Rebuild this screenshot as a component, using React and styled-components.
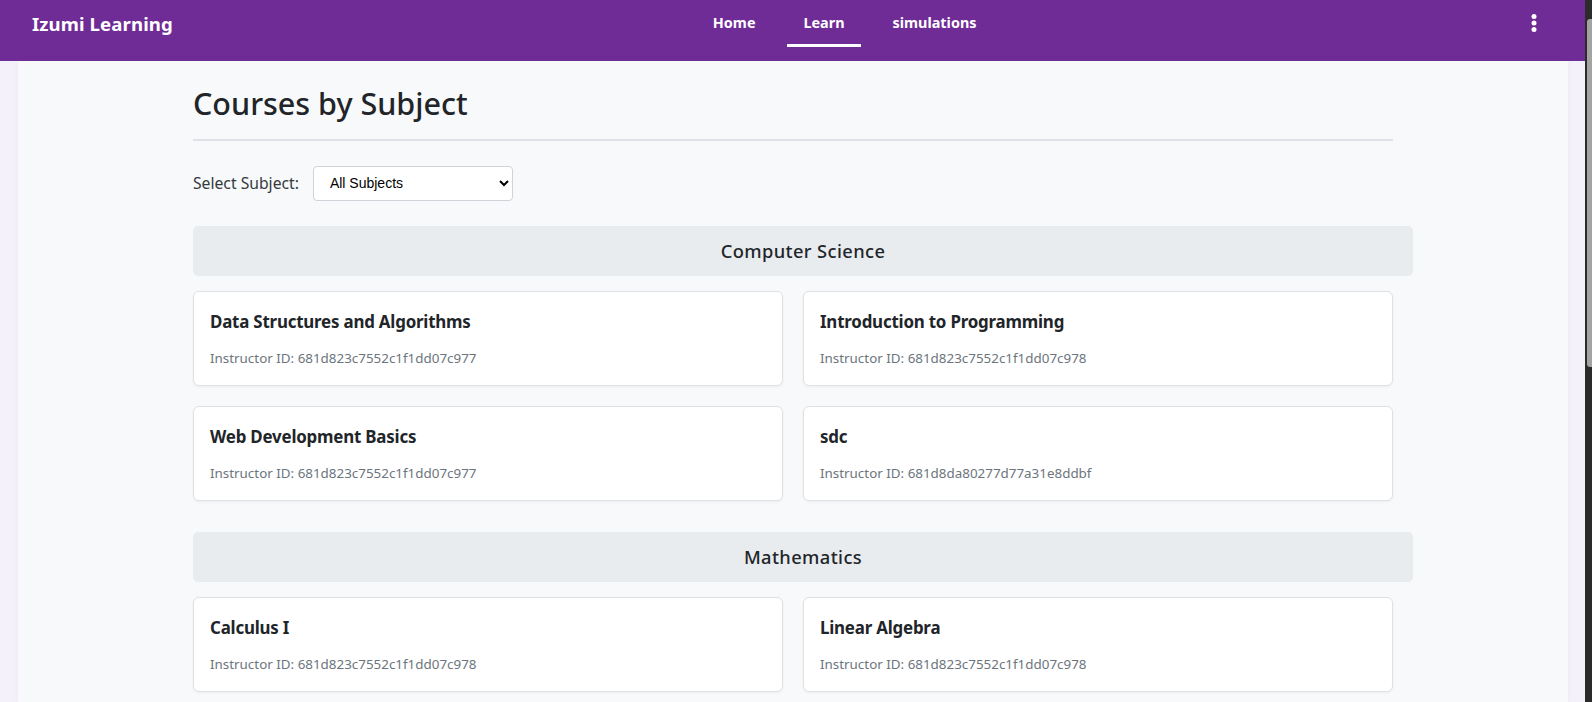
import React from 'react';
import styled, { createGlobalStyle } from 'styled-components';

const GlobalStyle = createGlobalStyle`
  body {
    margin: 0;
    background: #f5f1fa;
    font-family: "Noto Sans", "Open Sans", sans-serif;
    color: #212529;
  }
  * {
    -webkit-font-smoothing: antialiased;
  }
`;

const Shell = styled.div`
  display: flex;
  height: 702px;
  overflow: hidden;
`;

const Viewport = styled.div`
  flex: 1;
  min-width: 0;
  display: flex;
  flex-direction: column;
`;

const ScrollTrack = styled.div`
  width: 7px;
  background: #2b2b2b;
  display: flex;
  flex-direction: column;
  align-items: flex-end;
  padding-top: 19px;
  box-sizing: border-box;
`;

const ScrollThumb = styled.div`
  width: 5px;
  height: 348px;
  background: #a3a3a3;
  border-radius: 3px 0 0 3px;
`;

const Navbar = styled.nav`
  height: 61px;
  box-sizing: border-box;
  background: #6f2c97;
  display: flex;
  align-items: center;
  padding: 0 32px 14px;
  color: #fff;
`;

const Brand = styled.div`
  font-size: 18.6px;
  font-weight: 700;
  letter-spacing: 0.1px;
`;

const NavLinks = styled.ul`
  list-style: none;
  margin: 0 0 0 524px;
  padding: 0;
  display: flex;
  gap: 16px;
  align-self: stretch;
`;

const NavLink = styled.li`
  display: flex;
  align-items: center;
  padding: 0 16px;
  font-size: 14.4px;
  font-weight: 700;
  border-bottom: 3px solid ${(p) => (p.$active ? '#ffffff' : 'transparent')};
  box-sizing: border-box;
`;

const MenuButton = styled.button`
  margin-left: auto;
  margin-right: 16px;
  background: none;
  border: 0;
  padding: 0;
  display: flex;
  color: #fff;
  margin-top: -2px;
`;

const Page = styled.main`
  flex: 1;
  margin: 0 17px 0 18px;
  background: #f8f9fa;
  box-shadow: 0 0 6px rgba(111, 44, 151, 0.06);
`;

const Content = styled.div`
  width: 1200px;
  margin: 0 auto;
  padding-top: 24px;
`;

const Title = styled.h1`
  margin: 0;
  padding-bottom: 17px;
  border-bottom: 2px solid #dee2e6;
  font-size: 30.5px;
  font-weight: 500;
  line-height: 1.2;
  color: #212529;
`;

const FilterRow = styled.div`
  display: flex;
  align-items: center;
  margin-top: 25px;
  gap: 14px;
`;

const FilterLabel = styled.label`
  font-size: 15.7px;
  color: #343a40;
`;

const SubjectSelect = styled.select`
  width: 200px;
  height: 35px;
  border: 1px solid #ced4da;
  border-radius: 4px;
  background: #fff;
  padding: 0 10px 0 12px;
  font-family: "Liberation Sans", Arial, sans-serif;
  font-size: 14px;
  color: #000;
`;

const Section = styled.section`
  margin-top: 25px;
  & + & {
    margin-top: 31px;
  }
`;

const SubjectHeader = styled.h2`
  width: 100%;
  margin: 0 0 15px;
  padding: 10px;
  background: #e9ecef;
  border-radius: 5px;
  text-align: center;
  font-size: 18.3px;
  font-weight: 500;
  line-height: 30px;
  letter-spacing: 0.4px;
  color: #212529;
`;

const CardGrid = styled.div`
  display: grid;
  grid-template-columns: 1fr 1fr;
  gap: 20px;
`;

const Card = styled.div`
  background: #fff;
  border: 1px solid #dee2e6;
  border-radius: 6px;
  box-shadow: 0 1px 3px rgba(0, 0, 0, 0.05);
  padding: 19px 16px 16px;
  height: 95px;
  box-sizing: border-box;
`;

const CardTitle = styled.h3`
  margin: 0 0 15px;
  font-size: 16.9px;
  font-weight: 700;
  line-height: 1.3;
  color: #212529;
  letter-spacing: -0.2px;
`;

const CardMeta = styled.p`
  margin: 0;
  font-size: 13.4px;
  line-height: 1.5;
  color: #6c757d;
`;

const subjects = [
  {
    name: 'Computer Science',
    courses: [
      { title: 'Data Structures and Algorithms', instructor: '681d823c7552c1f1dd07c977' },
      { title: 'Introduction to Programming', instructor: '681d823c7552c1f1dd07c978' },
      { title: 'Web Development Basics', instructor: '681d823c7552c1f1dd07c977' },
      { title: 'sdc', instructor: '681d8da80277d77a31e8ddbf' },
    ],
  },
  {
    name: 'Mathematics',
    courses: [
      { title: 'Calculus I', instructor: '681d823c7552c1f1dd07c978' },
      { title: 'Linear Algebra', instructor: '681d823c7552c1f1dd07c978' },
    ],
  },
];

const KebabIcon = () => (
  <svg width="6" height="18" viewBox="0 0 6 18" fill="currentColor">
    <circle cx="3" cy="2.6" r="2.5" />
    <circle cx="3" cy="9" r="2.5" />
    <circle cx="3" cy="15.4" r="2.5" />
  </svg>
);

const App = () => {
  return (
    <>
      <GlobalStyle />
      <Shell>
        <Viewport>
          <Navbar>
            <Brand>Izumi Learning</Brand>
            <NavLinks>
              <NavLink>Home</NavLink>
              <NavLink $active>Learn</NavLink>
              <NavLink>simulations</NavLink>
            </NavLinks>
            <MenuButton aria-label="menu">
              <KebabIcon />
            </MenuButton>
          </Navbar>
          <Page>
            <Content>
              <Title>Courses by Subject</Title>
              <FilterRow>
                <FilterLabel htmlFor="subject">Select Subject:</FilterLabel>
                <SubjectSelect id="subject" defaultValue="all">
                  <option value="all">All Subjects</option>
                  <option value="cs">Computer Science</option>
                  <option value="math">Mathematics</option>
                </SubjectSelect>
              </FilterRow>
              {subjects.map((s) => (
                <Section key={s.name}>
                  <SubjectHeader>{s.name}</SubjectHeader>
                  <CardGrid>
                    {s.courses.map((c) => (
                      <Card key={c.title}>
                        <CardTitle>{c.title}</CardTitle>
                        <CardMeta>Instructor ID: {c.instructor}</CardMeta>
                      </Card>
                    ))}
                  </CardGrid>
                </Section>
              ))}
            </Content>
          </Page>
        </Viewport>
        <ScrollTrack>
          <ScrollThumb />
        </ScrollTrack>
      </Shell>
    </>
  );
};

export default App;
